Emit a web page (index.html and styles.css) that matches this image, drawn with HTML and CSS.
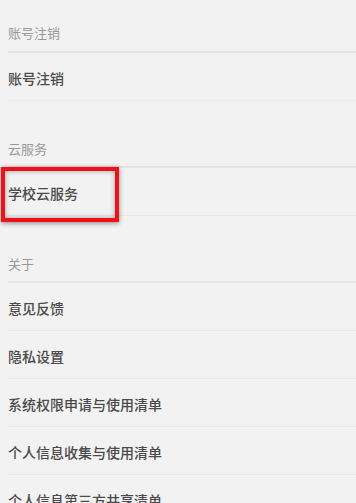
FILE: index.html
```html
<!DOCTYPE html>
<html lang="zh">
<head>
<meta charset="utf-8">
<title>设置</title>
<link rel="stylesheet" href="styles.css">
</head>
<body>
<div class="page">
  <div class="section-head first">账号注销</div>
  <div class="item">账号注销</div>

  <div class="section-head">云服务</div>
  <div class="item highlighted">学校云服务<span class="mark"></span></div>

  <div class="section-head">关于</div>
  <div class="item">意见反馈</div>
  <div class="item">隐私设置</div>
  <div class="item">系统权限申请与使用清单</div>
  <div class="item">个人信息收集与使用清单</div>
  <div class="item">个人信息第三方共享清单</div>
</div>
</body>
</html>
```
FILE: styles.css
```css
html, body {
  margin: 0;
  padding: 0;
  background: #f2f2f2;
}
.page {
  width: 356px;
  height: 503px;
  overflow: hidden;
  font-family: "Noto Sans CJK SC", "Noto Sans", sans-serif;
  padding-left: 8px;
  box-sizing: border-box;
}
.section-head {
  font-size: 13px;
  line-height: 18px;
  color: #999999;
  padding: 39px 0 8px;
  border-bottom: 2px solid #e4e4e4;
}
.section-head.first {
  padding-top: 24px;
  padding-bottom: 9px;
}
.item {
  position: relative;
  font-size: 14px;
  line-height: 20px;
  font-weight: 500;
  color: #4a4a4a;
  padding: 15px 0 12px;
  border-bottom: 1px solid #e8e8e8;
}
.mark {
  position: absolute;
  left: -7px;
  top: -1px;
  width: 110px;
  height: 47px;
  border: 4px solid #ee1118;
  box-shadow: 0 1px 5px rgba(0, 0, 0, 0.45), inset 0 0 5px rgba(0, 0, 0, 0.35);
}
```
